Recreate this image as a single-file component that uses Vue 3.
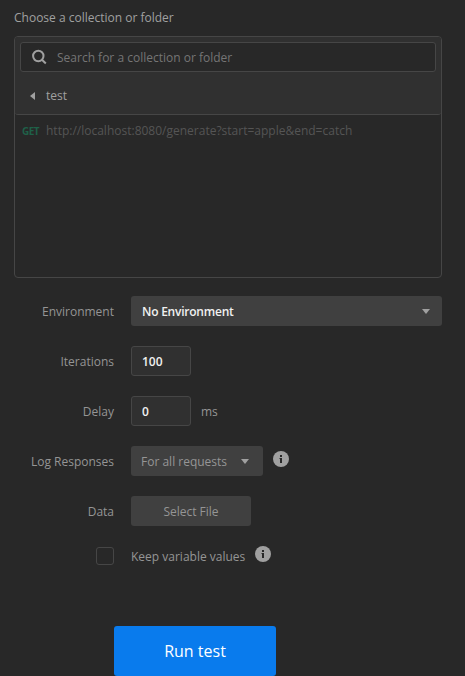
<script setup>
import { ref } from 'vue'

const search = ref('')
const iterations = ref('100')
const delay = ref('0')
const keep = ref(false)
</script>

<template>
  <main class="runner">
    <h1 class="heading">Choose a collection or folder</h1>

    <section class="picker">
      <div class="picker-head">
        <label class="search">
          <svg class="search-icon" width="16" height="16" viewBox="0 0 16 16">
            <circle cx="7.3" cy="7" r="5.2" />
            <path d="M11 10.8 L14.8 14.5" />
          </svg>
          <input v-model="search" class="search-input" placeholder="Search for a collection or folder" />
        </label>
        <div class="crumb">
          <svg width="5" height="8" viewBox="0 0 5 8"><path d="M5 0V8L0 4Z" /></svg>
          <span>test</span>
        </div>
      </div>
      <div class="request">
        <span class="method">GET</span>
        <span class="url">http://localhost:8080/generate?start=apple&amp;end=catch</span>
      </div>
    </section>

    <div class="row">
      <span class="label">Environment</span>
      <button class="control select wide">
        <span>No Environment</span>
        <svg class="caret" width="8" height="5" viewBox="0 0 8 5"><path d="M0 0H8L4 5Z" /></svg>
      </button>
    </div>
    <div class="row">
      <span class="label">Iterations</span>
      <input v-model="iterations" class="field" />
    </div>
    <div class="row">
      <span class="label">Delay</span>
      <input v-model="delay" class="field" />
      <span class="unit">ms</span>
    </div>
    <div class="row">
      <span class="label">Log Responses</span>
      <button class="control select log">
        <span>For all requests</span>
        <svg class="caret" width="8" height="5" viewBox="0 0 8 5"><path d="M0 0H8L4 5Z" /></svg>
      </button>
      <svg class="info" width="16" height="16" viewBox="0 0 16 16">
        <circle cx="8" cy="8" r="8" />
        <path d="M7 4H9V6H7ZM6.5 7H9V12H7V8H6.5Z" />
      </svg>
    </div>
    <div class="row">
      <span class="label">Data</span>
      <button class="control file">Select File</button>
    </div>
    <label class="row keep">
      <span class="label">
        <input v-model="keep" class="check" type="checkbox" />
      </span>
      <span class="keep-text">Keep variable values</span>
      <svg class="info" width="16" height="16" viewBox="0 0 16 16">
        <circle cx="8" cy="8" r="8" />
        <path d="M7 4H9V6H7ZM6.5 7H9V12H7V8H6.5Z" />
      </svg>
    </label>

    <button class="run">Run test</button>
  </main>
</template>

<style>
body {
  background: #282828;
}
</style>

<style scoped>
.runner {
  box-sizing: border-box;
  height: 676px;
  padding: 8px 23px 0 14px;
  display: flex;
  flex-direction: column;
  overflow: hidden;
  background: #282828;
  color: #959595;
  font: 12px/20px 'Open Sans', sans-serif;
}
.runner button,
.runner input {
  box-sizing: border-box;
  margin: 0;
  font: inherit;
  outline: none;
}
.heading {
  margin: 0 0 8px;
  font-size: 12px;
  font-weight: 400;
  color: #a0a0a0;
}
.picker {
  box-sizing: border-box;
  height: 242px;
  margin-bottom: 18px;
  border: 1px solid #464646;
  border-radius: 4px;
}
.picker-head {
  box-sizing: border-box;
  height: 78px;
  padding: 5px 5px 0;
  background: #303030;
  border-bottom: 1px solid #464646;
  border-radius: 3px;
}
.search {
  box-sizing: border-box;
  height: 30px;
  padding-left: 10px;
  display: flex;
  align-items: center;
  gap: 10px;
  background: #282828;
  border: 1px solid #464646;
  border-radius: 3px;
}
.search-icon {
  fill: none;
  stroke: #a0a0a0;
  stroke-width: 2;
}
.search-input {
  flex: 1;
  height: 26px;
  padding: 1px 0 0;
  border: 0;
  background: none;
  color: #a0a0a0;
}
.search-input::placeholder {
  color: #757575;
  opacity: 1;
}
.crumb {
  height: 20px;
  margin-top: 14px;
  padding-left: 10px;
  display: flex;
  align-items: center;
  gap: 11px;
  color: #a0a0a0;
}
.crumb svg {
  fill: #a0a0a0;
}
.request {
  height: 20px;
  margin-top: 6px;
  padding-left: 7px;
  display: flex;
}
.method {
  width: 24px;
  font-size: 10px;
  font-weight: 700;
  letter-spacing: -0.6px;
  color: #1f6048;
}
.url {
  color: #555;
}
.row {
  height: 30px;
  margin-bottom: 20px;
  display: flex;
  align-items: center;
}
.label {
  width: 100px;
  margin-right: 17px;
  padding-top: 1px;
  text-align: right;
}
.control {
  height: 30px;
  padding: 1px 10px 0;
  border: 0;
  border-radius: 3px;
  background: #404040;
  color: #959595;
}
.select {
  display: flex;
  align-items: center;
  justify-content: space-between;
}
.wide {
  width: 311px;
  padding: 1px 12px 0 11px;
  color: #f0f0f0;
}
.wide span {
  letter-spacing: -0.23px;
}
.log {
  width: 132px;
  padding-right: 14px;
}
.caret {
  fill: #a0a0a0;
}
.field {
  width: 60px;
  height: 30px;
  padding: 1px 10px 0;
  border: 1px solid #464646;
  border-radius: 3px;
  background: #303030;
  color: #f0f0f0;
}
.runner .field,
.runner .wide {
  font-weight: 600;
}
.unit {
  margin-left: 10px;
  padding-top: 1px;
}
.info {
  margin: 0 0 5px 10px;
}
.info circle {
  fill: #a0a0a0;
}
.info path {
  fill: #282828;
}
.file {
  width: 120px;
}
.keep {
  height: 20px;
  margin-bottom: 60px;
}
.keep .label {
  display: flex;
  justify-content: flex-end;
  padding: 0;
}
.check {
  width: 18px;
  height: 18px;
  appearance: none;
  border: 1px solid #464646;
  border-radius: 3px;
}
.keep-text {
  padding-top: 1px;
}
.runner .run {
  width: 162px;
  height: 50px;
  margin-left: 100px;
  padding: 0;
  border: 0;
  border-radius: 3px;
  background: #097bed;
  color: #fff;
  font-size: 16px;
}
</style>
